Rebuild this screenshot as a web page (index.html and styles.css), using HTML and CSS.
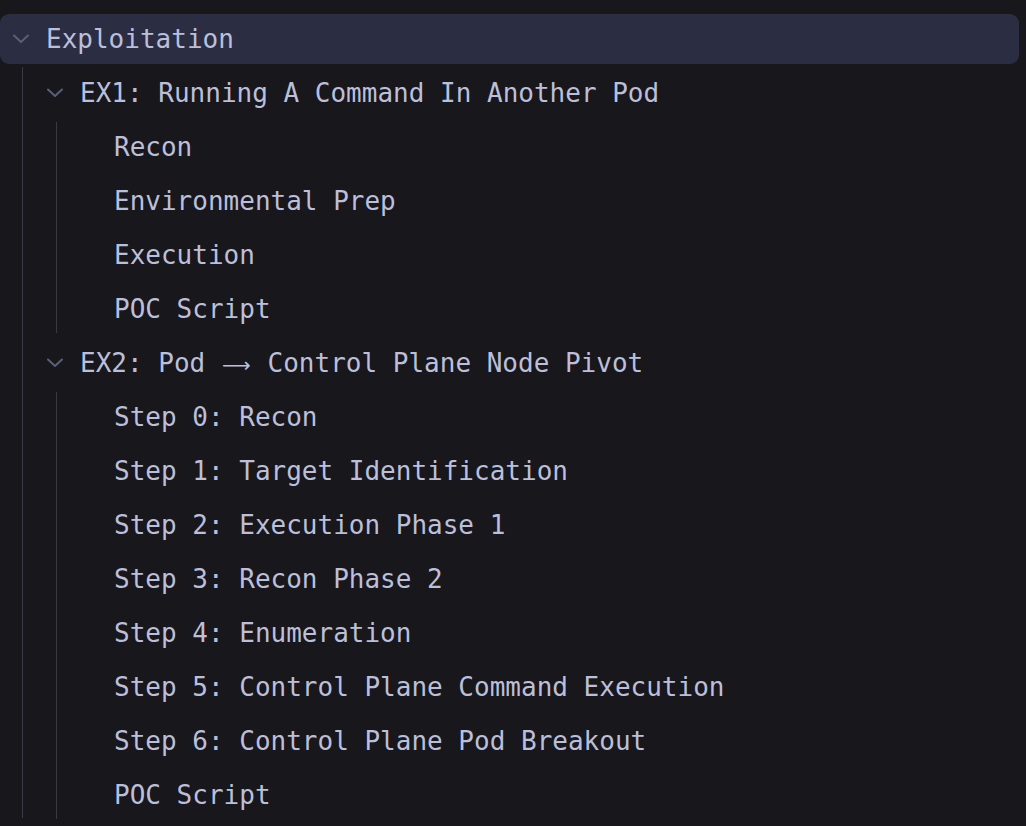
FILE: index.html
```html
<!DOCTYPE html>
<html lang="en">
<head>
<meta charset="utf-8">
<title>Tree</title>
<link rel="stylesheet" href="styles.css">
</head>
<body>
<div class="tree">
  <div class="node">
    <div class="row row-selected level0">
      <svg class="chev" viewBox="0 0 18 10" width="18" height="10"><path d="M2 1.5 L9 8 L16 1.5"/></svg>
      <span class="label">Exploitation</span>
    </div>
    <div class="children children-l0">
      <div class="node">
        <div class="row level1">
          <svg class="chev" viewBox="0 0 18 10" width="18" height="10"><path d="M2 1.5 L9 8 L16 1.5"/></svg>
          <span class="label">EX1: Running A Command In Another Pod</span>
        </div>
        <div class="children children-l1">
          <div class="row level2"><span class="slot"></span><span class="label">Recon</span></div>
          <div class="row level2"><span class="slot"></span><span class="label">Environmental Prep</span></div>
          <div class="row level2"><span class="slot"></span><span class="label">Execution</span></div>
          <div class="row level2"><span class="slot"></span><span class="label">POC Script</span></div>
        </div>
      </div>
      <div class="node">
        <div class="row level1">
          <svg class="chev" viewBox="0 0 18 10" width="18" height="10"><path d="M2 1.5 L9 8 L16 1.5"/></svg>
          <span class="label">EX2: Pod <span class="arrow">⟶</span> Control Plane Node Pivot</span>
        </div>
        <div class="children children-l1">
          <div class="row level2"><span class="slot"></span><span class="label">Step 0: Recon</span></div>
          <div class="row level2"><span class="slot"></span><span class="label">Step 1: Target Identification</span></div>
          <div class="row level2"><span class="slot"></span><span class="label">Step 2: Execution Phase 1</span></div>
          <div class="row level2"><span class="slot"></span><span class="label">Step 3: Recon Phase 2</span></div>
          <div class="row level2"><span class="slot"></span><span class="label">Step 4: Enumeration</span></div>
          <div class="row level2"><span class="slot"></span><span class="label">Step 5: Control Plane Command Execution</span></div>
          <div class="row level2"><span class="slot"></span><span class="label">Step 6: Control Plane Pod Breakout</span></div>
          <div class="row level2"><span class="slot"></span><span class="label">POC Script</span></div>
        </div>
      </div>
    </div>
  </div>
</div>
</body>
</html>
```
FILE: styles.css
```css
html, body {
  margin: 0;
  padding: 0;
  background: #17171c;
  height: 100%;
  overflow: hidden;
}

.tree {
  padding-top: 12px;
  font-family: "DejaVu Sans Mono", "Liberation Mono", monospace;
  font-size: 26px;
  color: #bcbfda;
}

.row {
  display: flex;
  align-items: center;
  height: 54px;
  white-space: nowrap;
}

.row-selected {
  height: 50px;
  margin: 2px 7px 2px 0;
  background: #2b2e42;
  border-radius: 9px;
}

.level0 { padding-left: 12px; }
.level1 { padding-left: 46px; }
.level2 { padding-left: 80px; }

.chev, .slot {
  flex: none;
  width: 18px;
  height: 10px;
  margin-right: 16px;
}

.chev path {
  fill: none;
  stroke: #5b5e78;
  stroke-width: 2;
  stroke-linecap: round;
  stroke-linejoin: round;
}

.label {
  line-height: 1;
}

.arrow {
  display: inline-flex;
  justify-content: center;
  width: 31px;
  font-family: "DejaVu Sans", sans-serif;
  font-size: 20px;
  line-height: 1;
}

.children {
  background-repeat: no-repeat;
  background-image: linear-gradient(#393a45, #393a45);
  background-size: 1px calc(100% - 5px);
}

.children-l0 { background-position: 22px 1px; }
.children-l1 { background-position: 56px 2px; }
```
